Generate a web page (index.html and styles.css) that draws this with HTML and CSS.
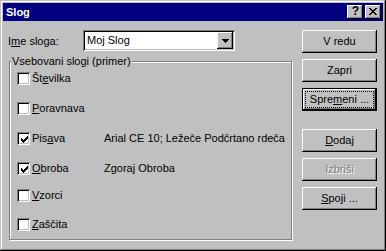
FILE: index.html
```html
<!DOCTYPE html>
<html lang="sl">
<head>
    <meta charset="UTF-8">
    <title>Slog</title>
    <link rel="stylesheet" href="styles.css">
</head>
<body>
    <div class="window">
        <div class="caption">
            <span class="caption-title">Slog</span>
            <div class="caption-buttons">
                <span class="cap-btn cap-help">?</span>
                <span class="cap-btn cap-close">
                    <svg width="8" height="7" viewBox="0 0 8 7" shape-rendering="crispEdges"><path d="M0 0h2v1h-2zM6 0h2v1h-2zM1 1h2v1h-2zM5 1h2v1h-2zM2 2h4v1h-4zM3 3h2v1h-2zM2 4h4v1h-4zM1 5h2v1h-2zM5 5h2v1h-2zM0 6h2v1h-2zM6 6h2v1h-2z" fill="#000"/></svg>
                </span>
            </div>
        </div>

        <div class="client">
            <div class="main">
                <div class="name-row">
                    <label class="name-label">I<u>m</u>e sloga:</label>
                    <div class="combo">
                        <span class="combo-text">Moj Slog</span>
                        <span class="combo-btn">
                            <svg width="7" height="4" viewBox="0 0 7 4" shape-rendering="crispEdges"><path d="M0 0h7v1h-7zM1 1h5v1h-5zM2 2h3v1h-3zM3 3h1v1h-1z" fill="#000"/></svg>
                        </span>
                    </div>
                </div>

                <div class="group">
                    <span class="legend">Vsebovani slogi (primer)</span>
                    <div class="row">
                        <span class="check"></span>
                        <span class="row-label">Št<u>e</u>vilka</span>
                    </div>
                    <div class="row">
                        <span class="check"></span>
                        <span class="row-label"><u>P</u>oravnava</span>
                    </div>
                    <div class="row">
                        <span class="check checked">
                            <svg width="7" height="7" viewBox="0 0 7 7" shape-rendering="crispEdges"><path d="M6 0h1v1h-1zM5 1h2v1h-2zM0 2h1v1h-1zM4 2h3v1h-3zM0 3h2v1h-2zM3 3h3v1h-3zM0 4h5v1h-5zM1 5h3v1h-3zM2 6h1v1h-1z" fill="#000"/></svg>
                        </span>
                        <span class="row-label">Pis<u>a</u>va</span>
                        <span class="row-value">Arial CE 10; Ležeče Podčrtano rdeča</span>
                    </div>
                    <div class="row">
                        <span class="check checked">
                            <svg width="7" height="7" viewBox="0 0 7 7" shape-rendering="crispEdges"><path d="M6 0h1v1h-1zM5 1h2v1h-2zM0 2h1v1h-1zM4 2h3v1h-3zM0 3h2v1h-2zM3 3h3v1h-3zM0 4h5v1h-5zM1 5h3v1h-3zM2 6h1v1h-1z" fill="#000"/></svg>
                        </span>
                        <span class="row-label"><u>O</u>broba</span>
                        <span class="row-value">Zgoraj Obroba</span>
                    </div>
                    <div class="row row-close">
                        <span class="check"></span>
                        <span class="row-label"><u>V</u>zorci</span>
                    </div>
                    <div class="row row-mid">
                        <span class="check"></span>
                        <span class="row-label"><u>Z</u>aščita</span>
                    </div>
                </div>
            </div>

            <div class="buttons">
                <span class="btn">V redu</span>
                <span class="btn">Zapri</span>
                <span class="btn btn-default">Spre<u>m</u>eni ...</span>
                <span class="btn btn-spaced"><u>D</u>odaj</span>
                <span class="btn btn-disabled">Izbriši</span>
                <span class="btn"><u>S</u>poji ...</span>
            </div>
        </div>
    </div>
</body>
</html>
```

FILE: styles.css
```css
body {
    margin: 0;
    padding: 0;
    background-color: #c0c0c0;
    font-family: 'Liberation Sans', Arial, sans-serif;
    font-size: 11px;
    line-height: 13px;
    color: #000;
}
u {
    text-underline-offset: 1px;
}
.window {
    width: 386px;
    height: 251px;
    box-sizing: border-box;
    padding: 3px;
    background-color: #c0c0c0;
    box-shadow: inset -1px -1px #000, inset 1px 1px #c0c0c0, inset -2px -2px #808080, inset 2px 2px #fff;
    display: flex;
    flex-direction: column;
}
.caption {
    height: 18px;
    background-color: #000080;
    display: flex;
    align-items: center;
    justify-content: space-between;
    padding: 0 2px 0 3px;
}
.caption-title {
    color: #fff;
    font-weight: bold;
}
.caption-buttons {
    display: flex;
    gap: 2px;
}
.cap-btn {
    width: 16px;
    height: 14px;
    box-sizing: border-box;
    background-color: #c0c0c0;
    box-shadow: inset -1px -1px #000, inset 1px 1px #fff, inset -2px -2px #808080;
    display: flex;
    align-items: center;
    justify-content: center;
}
.cap-help {
    font-weight: bold;
    font-size: 12px;
    padding: 0 0 1px 1px;
}
.cap-close svg {
    margin: 0 1px 1px 0;
}
.client {
    display: flex;
    justify-content: space-between;
    padding: 9px 6px 0 5px;
}
.main {
    display: flex;
    flex-direction: column;
}
.name-row {
    display: flex;
    align-items: center;
    height: 21px;
}
.name-label {
    width: 75px;
    padding-top: 1px;
}
.combo {
    width: 152px;
    height: 21px;
    box-sizing: border-box;
    background-color: #fff;
    box-shadow: inset 1px 1px #808080, inset -1px -1px #fff, inset 2px 2px #000, inset -2px -2px #c0c0c0;
    display: flex;
    align-items: center;
    justify-content: space-between;
    padding: 2px;
}
.combo-text {
    padding-left: 2px;
}
.combo-btn {
    width: 16px;
    height: 17px;
    box-sizing: border-box;
    background-color: #c0c0c0;
    box-shadow: inset -1px -1px #000, inset 1px 1px #fff, inset -2px -2px #808080;
    display: flex;
    align-items: center;
    justify-content: center;
}
.group {
    position: relative;
    margin: 10px 0 0 1px;
    width: 283px;
    height: 179px;
    box-sizing: border-box;
    border: 1px solid #808080;
    box-shadow: 1px 1px 0 #fff, inset 1px 1px 0 #fff;
    padding: 10px 0 0 7px;
    display: flex;
    flex-direction: column;
}
.legend {
    position: absolute;
    top: -7px;
    left: 1px;
    padding: 0 1px;
    background-color: #c0c0c0;
}
.row {
    display: grid;
    grid-template-columns: 13px 70px auto;
    column-gap: 2px;
    align-items: center;
    height: 13px;
}
.row + .row {
    margin-top: 17px;
}
.row + .row-close {
    margin-top: 14px;
}
.row + .row-mid {
    margin-top: 16px;
}
.check {
    width: 13px;
    height: 13px;
    box-sizing: border-box;
    background-color: #fff;
    box-shadow: inset 1px 1px #808080, inset -1px -1px #fff, inset 2px 2px #000, inset -2px -2px #c0c0c0;
    display: flex;
    align-items: center;
    justify-content: center;
}
.check svg {
    margin: 1px 0 0 1px;
}
.buttons {
    display: flex;
    flex-direction: column;
    gap: 6px;
}
.btn {
    position: relative;
    width: 75px;
    height: 23px;
    box-sizing: border-box;
    background-color: #c0c0c0;
    box-shadow: inset -1px -1px #000, inset 1px 1px #fff, inset -2px -2px #808080;
    display: flex;
    align-items: center;
    justify-content: center;
}
.btn-default {
    border: 1px solid #000;
}
.btn-default::after {
    content: '';
    position: absolute;
    top: 3px;
    left: 3px;
    right: 3px;
    bottom: 3px;
    outline: 1px dotted #000;
}
.btn-spaced {
    margin-top: 12px;
}
.btn-disabled {
    color: #808080;
    text-shadow: 1px 1px 0 #fff;
}
```
